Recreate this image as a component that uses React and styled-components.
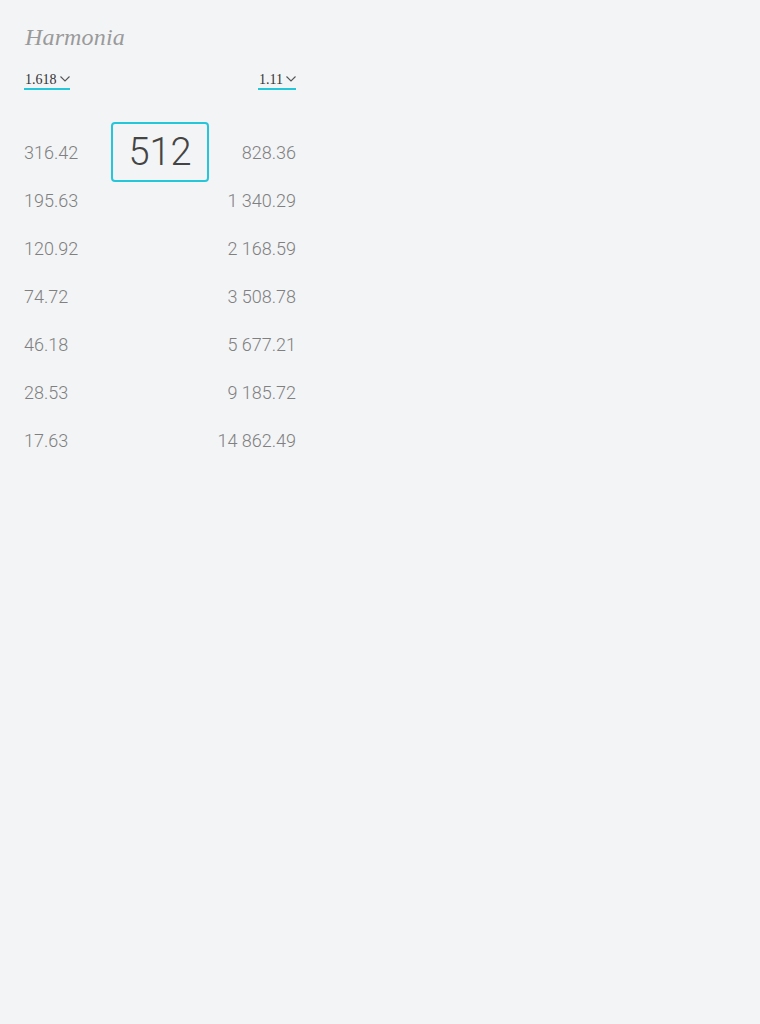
import React from "react";
import styled, { createGlobalStyle } from "styled-components";

const Global = createGlobalStyle`
  html, body { margin: 0; padding: 0; background: #f3f4f6; }
  body { font-family: Roboto, "Noto Sans", sans-serif; }
`;

const Page = styled.div`
  min-height: 1024px;
  background: #f3f4f6;
  padding: 22px 24px;
  box-sizing: border-box;
  width: 320px;
`;

const Title = styled.h1`
  margin: 0;
  font-family: "Liberation Serif", "DejaVu Serif", serif;
  font-style: italic;
  font-weight: normal;
  font-size: 24px;
  letter-spacing: 0.15px;
  color: #9a9a9a;
  line-height: 30px;
  padding-left: 1px;
`;

const Controls = styled.div`
  display: flex;
  justify-content: space-between;
  margin-top: 16px;
  width: 272px;
`;

const Select = styled.div`
  display: inline-flex;
  align-items: center;
  gap: 3px;
  font-family: "Liberation Serif", "DejaVu Serif", serif;
  font-size: 14px;
  color: #333;
  border-bottom: 2px solid #26c6da;
  padding: 2px 0 0 1px;
  height: 18px;
  line-height: 17px;
  box-sizing: content-box;
`;

const Chevron = () => (
  <svg width="10" height="6" viewBox="0 0 10 6" fill="none" stroke="#555" strokeWidth="1.1">
    <path d="M0.5 0.5 L5 5 L9.5 0.5" />
  </svg>
);

const Table = styled.div`
  display: grid;
  grid-template-columns: 1fr 98px 1fr;
  grid-auto-rows: 48px;
  width: 272px;
  margin-top: 38px;
  align-items: center;
`;

const Cell = styled.div`
  font-family: Roboto, sans-serif;
  font-weight: 300;
  font-size: 18px;
  color: #808080;
  text-align: ${(p) => (p.$right ? "right" : "left")};
  grid-column: ${(p) => (p.$right ? 3 : 1)};
`;

const Base = styled.div`
  grid-column: 2;
  grid-row: 1;
  box-sizing: border-box;
  height: 60px;
  border: 2px solid #26c6da;
  border-radius: 4px;
  display: flex;
  align-items: center;
  justify-content: center;
  font-family: Roboto, sans-serif;
  font-weight: 300;
  font-size: 38px;
  color: #444;
`;

const left = ["316.42", "195.63", "120.92", "74.72", "46.18", "28.53", "17.63"];
const right = ["828.36", "1 340.29", "2 168.59", "3 508.78", "5 677.21", "9 185.72", "14 862.49"];

export default function App() {
  return (
    <>
      <Global />
      <Page>
        <Title>Harmonia</Title>
        <Controls>
          <Select>1.618 <Chevron /></Select>
          <Select>1.11 <Chevron /></Select>
        </Controls>
        <Table>
          {left.map((v, i) => (
            <React.Fragment key={i}>
              <Cell style={{ gridRow: i + 1 }}>{v}</Cell>
              {i === 0 && <Base>512</Base>}
              <Cell $right style={{ gridRow: i + 1 }}>{right[i]}</Cell>
            </React.Fragment>
          ))}
        </Table>
      </Page>
    </>
  );
}
